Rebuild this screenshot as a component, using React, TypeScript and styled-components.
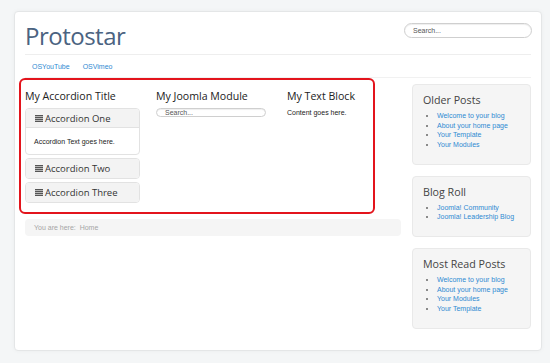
import React from "react";
import styled, { createGlobalStyle } from "styled-components";

const GlobalStyle = createGlobalStyle`
  html, body { margin: 0; padding: 0; background: #f4f6f7; }
  body { font-family: "Liberation Sans", Arial, sans-serif; color: #333; }
  * { box-sizing: border-box; }
`;

const Page = styled.div`
  padding: 11px 0 11px 14px;
`;

const Container = styled.div`
  width: 528px;
  background: #fff;
  border: 1px solid #e4e6e7;
  border-radius: 4px;
  box-shadow: 0 0 4px rgba(0, 0, 0, 0.04);
  padding: 0 10px 21px 10px;
`;

const Header = styled.header`
  display: flex;
  justify-content: space-between;
  align-items: flex-start;
  padding: 8px 0 2px 0;
`;

const Brand = styled.h1`
  margin: 0;
  font-family: "Open Sans", sans-serif;
  font-weight: 400;
  font-size: 24px;
  line-height: 32px;
  letter-spacing: -0.5px;
  color: #4b6381;
`;

const SearchPill = styled.div<{ $w: number; $h: number; $fs: number; $pl: number }>`
  width: ${(p) => p.$w}px;
  height: ${(p) => p.$h}px;
  border: 1px solid #cfcfcf;
  border-radius: ${(p) => p.$h / 2}px;
  box-shadow: inset 0 1px 1px rgba(0, 0, 0, 0.07);
  background: #fff;
  display: flex;
  align-items: center;
  padding-left: ${(p) => p.$pl}px;
  font-family: "Liberation Sans", Arial, sans-serif;
  font-size: ${(p) => p.$fs}px;
  color: #555;
`;

const HeaderSearch = styled(SearchPill)`
  margin-top: 3px;
  margin-right: -1px;
`;

const Nav = styled.nav`
  display: flex;
  align-items: center;
  gap: 13px;
  height: 24px;
  padding-left: 7px;
  border-top: 1px solid #eeeeee;
  border-bottom: 1px solid #f1f1f1;
`;

const Link = styled.a`
  font-family: "Liberation Sans", Arial, sans-serif;
  font-size: 7px;
  color: #2f8ad2;
  text-decoration: none;
`;

const Body = styled.div`
  display: flex;
  gap: 11px;
`;

const Main = styled.main`
  width: 376px;
  display: flex;
  flex-direction: column;
`;

const Highlight = styled.section`
  width: 356px;
  height: 136px;
  margin-left: -6px;
  border: 2px solid #e3141c;
  border-radius: 6px;
  padding: 9px 4px 0 4px;
  display: grid;
  grid-template-columns: 115px 115px 1fr;
  column-gap: 16px;
  align-items: start;
`;

const Column = styled.div`
  display: flex;
  flex-direction: column;
`;

const ModuleTitle = styled.h3`
  margin: 0 0 5px 0;
  font-family: "Open Sans", sans-serif;
  font-weight: 400;
  font-size: 10.6px;
  line-height: 14px;
  color: #222;
`;

const Accordion = styled.div`
  display: flex;
  flex-direction: column;
  gap: 3px;
`;

const AccGroup = styled.div`
  border: 1px solid #e2e2e2;
  border-radius: 4px;
  overflow: hidden;
  background: #fff;
`;

const AccHeader = styled.div<{ $open?: boolean }>`
  height: 19px;
  display: flex;
  align-items: center;
  gap: 2px;
  padding-left: 9px;
  background: #f3f3f3;
  border-bottom: ${(p) => (p.$open ? "1px solid #e2e2e2" : "none")};
  font-family: "Open Sans", sans-serif;
  font-size: 9.5px;
  color: #333;
`;

const AccBody = styled.div`
  height: 26px;
  display: flex;
  align-items: center;
  padding-left: 8px;
  font-size: 7px;
  color: #222;
`;

const Text = styled.p`
  margin: 0;
  font-size: 7px;
  line-height: 10px;
  color: #222;
`;

const Breadcrumb = styled.div`
  margin-top: 5px;
  height: 17px;
  background: #f5f5f5;
  border-radius: 4px;
  display: flex;
  align-items: center;
  padding-left: 9px;
  font-size: 7px;
  color: #a5a5a5;
  white-space: pre;
`;

const Sidebar = styled.aside`
  width: 119px;
  margin-top: 6px;
  display: flex;
  flex-direction: column;
  gap: 11px;
`;

const Well = styled.div`
  background: #f5f5f5;
  border: 1px solid #e9e9e9;
  border-radius: 4px;
  padding: 8px 8px 14px 10px;
`;

const WellTitle = styled.h3`
  margin: 0 0 4px 0;
  font-family: "Open Sans", sans-serif;
  font-weight: 400;
  font-size: 10.7px;
  line-height: 14px;
  color: #444;
`;

const List = styled.ul`
  margin: 0;
  padding-left: 14px;
  list-style: disc;
  color: #666;
`;

const Item = styled.li`
  font-size: 7px;
  line-height: 9.67px;
`;

const MenuIcon = () => (
  <svg width="8" height="7" viewBox="0 0 8 7">
    <rect x="0" y="0" width="8" height="1.3" fill="#555" />
    <rect x="0" y="1.9" width="8" height="1.3" fill="#555" />
    <rect x="0" y="3.8" width="8" height="1.3" fill="#555" />
    <rect x="0" y="5.7" width="8" height="1.3" fill="#555" />
  </svg>
);

const sidebarModules = [
  {
    title: "Older Posts",
    items: ["Welcome to your blog", "About your home page", "Your Template", "Your Modules"],
  },
  { title: "Blog Roll", items: ["Joomla! Community", "Joomla! Leadership Blog"] },
  {
    title: "Most Read Posts",
    items: ["Welcome to your blog", "About your home page", "Your Modules", "Your Template"],
  },
];

export default function App() {
  return (
    <>
      <GlobalStyle />
      <Page>
        <Container>
          <Header>
            <Brand>Protostar</Brand>
            <HeaderSearch $w={128} $h={15} $fs={7} $pl={8}>
              Search...
            </HeaderSearch>
          </Header>
          <Nav>
            <Link href="#">OSYouTube</Link>
            <Link href="#">OSVimeo</Link>
          </Nav>
          <Body>
            <Main>
              <Highlight>
                <Column>
                  <ModuleTitle>My Accordion Title</ModuleTitle>
                  <Accordion>
                    <AccGroup>
                      <AccHeader $open>
                        <MenuIcon />
                        <span>Accordion One</span>
                      </AccHeader>
                      <AccBody>Accordion Text goes here.</AccBody>
                    </AccGroup>
                    <AccGroup>
                      <AccHeader>
                        <MenuIcon />
                        <span>Accordion Two</span>
                      </AccHeader>
                    </AccGroup>
                    <AccGroup>
                      <AccHeader>
                        <MenuIcon />
                        <span>Accordion Three</span>
                      </AccHeader>
                    </AccGroup>
                  </Accordion>
                </Column>
                <Column>
                  <ModuleTitle>My Joomla Module</ModuleTitle>
                  <SearchPill $w={110} $h={9} $fs={7} $pl={8}>
                    Search...
                  </SearchPill>
                </Column>
                <Column>
                  <ModuleTitle>My Text Block</ModuleTitle>
                  <Text>Content goes here.</Text>
                </Column>
              </Highlight>
              <Breadcrumb>You are here:  Home</Breadcrumb>
            </Main>
            <Sidebar>
              {sidebarModules.map((m) => (
                <Well key={m.title}>
                  <WellTitle>{m.title}</WellTitle>
                  <List>
                    {m.items.map((it) => (
                      <Item key={it}>
                        <Link href="#">{it}</Link>
                      </Item>
                    ))}
                  </List>
                </Well>
              ))}
            </Sidebar>
          </Body>
        </Container>
      </Page>
    </>
  );
}
